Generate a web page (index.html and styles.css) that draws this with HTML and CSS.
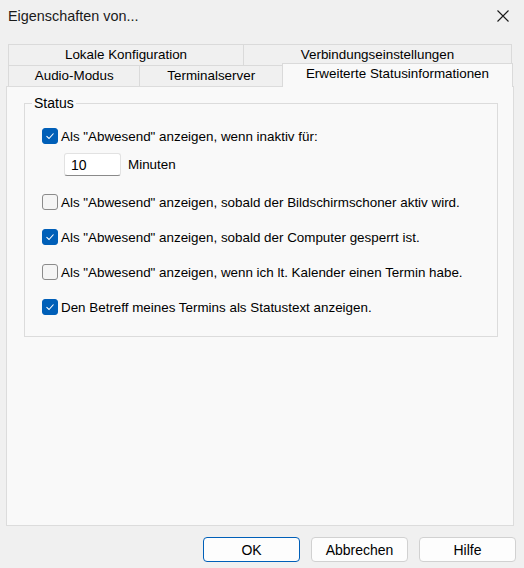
FILE: index.html
```html
<!DOCTYPE html>
<html lang="de">
<head>
    <meta charset="UTF-8">
    <title>Eigenschaften von...</title>
    <link rel="stylesheet" href="styles.css">
</head>
<body>
    <div class="titlebar">
        <span class="titel">Eigenschaften von...</span>
        <svg class="schliessen" width="12" height="12" viewBox="0 0 12 12">
            <path d="M0.5 0.5 L11.5 11.5 M11.5 0.5 L0.5 11.5" stroke="#1a1a1a" stroke-width="1.1" fill="none"/>
        </svg>
    </div>

    <div class="tabs">
        <div class="tab-reihe">
            <div class="tab tab-lokal">Lokale Konfiguration</div>
            <div class="tab tab-verbindung">Verbindungseinstellungen</div>
        </div>
        <div class="tab-reihe">
            <div class="tab tab-audio">Audio-Modus</div>
            <div class="tab tab-terminal">Terminalserver</div>
            <div class="tab tab-aktiv">Erweiterte Statusinformationen</div>
        </div>
    </div>

    <div class="panel">
        <fieldset class="gruppe">
            <legend>Status</legend>

            <label class="option erste">
                <span class="box an"></span>
                Als "Abwesend" anzeigen, wenn inaktiv für:
            </label>
            <div class="minuten">
                <input type="text" value="10" class="feld">
                <span>Minuten</span>
            </div>

            <label class="option nach-feld">
                <span class="box"></span>
                Als "Abwesend" anzeigen, sobald der Bildschirmschoner aktiv wird.
            </label>
            <label class="option">
                <span class="box an"></span>
                Als "Abwesend" anzeigen, sobald der Computer gesperrt ist.
            </label>
            <label class="option">
                <span class="box"></span>
                Als "Abwesend" anzeigen, wenn ich lt. Kalender einen Termin habe.
            </label>
            <label class="option">
                <span class="box an"></span>
                Den Betreff meines Termins als Statustext anzeigen.
            </label>
        </fieldset>
    </div>

    <div class="knoepfe">
        <button class="knopf standard">OK</button>
        <button class="knopf">Abbrechen</button>
        <button class="knopf">Hilfe</button>
    </div>
</body>
</html>
```

FILE: styles.css
```css
body {
    margin: 0;
    width: 524px;
    height: 568px;
    background-color: #f0f0f0;
    font-family: "Liberation Sans", Arial, sans-serif;
    font-size: 13.4px;
    color: #000000;
    overflow: hidden;
}

.titlebar {
    height: 32px;
    padding: 0 15px 0 8px;
    display: flex;
    justify-content: space-between;
    align-items: center;
}

.titel {
    font-size: 14.4px;
    color: #1a1a1a;
}

/* Registerkarten in zwei Reihen */
.tabs {
    margin: 12px 0 0 8px;
    width: 504px;
}

.tab-reihe {
    display: flex;
    height: 21px;
}

.tab {
    box-sizing: border-box;
    height: 21px;
    line-height: 20px;
    text-align: center;
    background-color: #f0f0f0;
    border: 1px solid #dadada;
    border-bottom: none;
    margin-right: -1px;
}

.tab-lokal { width: 236px; }
.tab-verbindung { width: 269px; }
.tab-audio { width: 133px; }
.tab-terminal { width: 144px; }

.tab-aktiv {
    width: 232px;
    height: 24px;
    margin-top: -2px;
    line-height: 20px;
    background-color: #f9f9f9;
    position: relative;
    z-index: 1;
}

.panel {
    box-sizing: border-box;
    margin: 0 0 0 6px;
    width: 508px;
    height: 440px;
    background-color: #f9f9f9;
    border: 1px solid #dcdcdc;
    padding: 7px 0 0 17px;
}

.gruppe {
    margin: 0;
    width: 474px;
    box-sizing: border-box;
    border: 1px solid #dcdcdc;
    padding: 14px 0 19px 17px;
}

.gruppe legend {
    padding: 0 2px;
    margin-left: -10px;
    line-height: 18px;
    font-size: 14px;
}

.option {
    display: flex;
    align-items: center;
    height: 20px;
    margin-top: 15px;
    white-space: nowrap;
}

.option.erste {
    margin-top: 0;
}

.option.nach-feld {
    margin-top: 16px;
}

.box {
    box-sizing: border-box;
    width: 16px;
    height: 16px;
    margin-right: 3px;
    border: 1px solid #8b8b8b;
    border-radius: 3px;
    background-color: #f5f5f5;
    flex-shrink: 0;
}

.box.an {
    border-color: #005fb8;
    background-color: #005fb8;
    background-image: url("data:image/svg+xml;utf8,<svg xmlns='http://www.w3.org/2000/svg' width='14' height='14' viewBox='0 0 14 14'><path d='M3.5 7.2 L6 9.5 L10.5 4.5' stroke='white' stroke-width='1.1' fill='none'/></svg>");
    background-repeat: no-repeat;
    background-position: center;
}

.minuten {
    display: flex;
    align-items: center;
    margin: 7px 0 0 22px;
    height: 23px;
}

.feld {
    box-sizing: border-box;
    width: 57px;
    height: 23px;
    margin: 0 7px 0 0;
    padding: 0 6px;
    font-family: inherit;
    font-size: 14px;
    background-color: #ffffff;
    border: 1px solid #e2e2e2;
    border-bottom-color: #8a8a8a;
    border-radius: 3px;
    outline: none;
}

.knoepfe {
    display: flex;
    justify-content: flex-end;
    gap: 11px;
    padding: 11px 8px 0 0;
}

.knopf {
    box-sizing: border-box;
    width: 97px;
    height: 25px;
    font-family: inherit;
    font-size: 14px;
    color: #000000;
    background-color: #fdfdfd;
    border: 1px solid #d1d1d1;
    border-radius: 4px;
    padding: 0;
}

.knopf.standard {
    border-color: #005fb8;
}
```
